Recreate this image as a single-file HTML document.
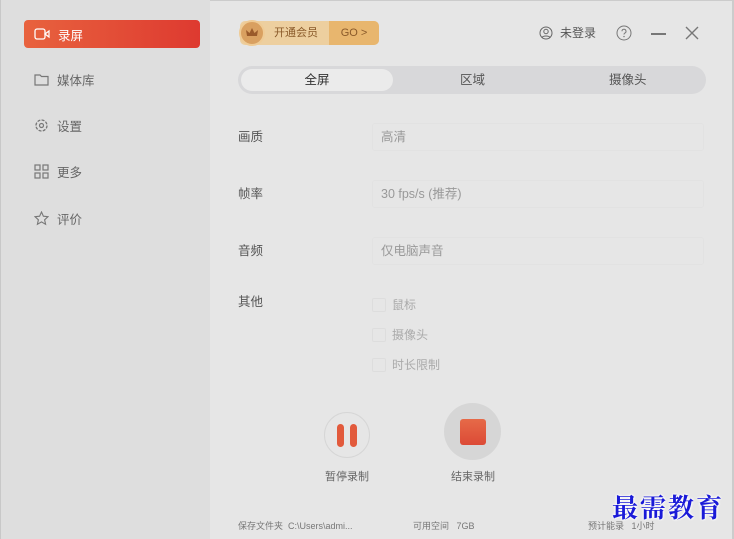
<!DOCTYPE html><html><head><meta charset="utf-8"><style>
*{margin:0;padding:0;box-sizing:border-box}
body{width:734px;height:539px;overflow:hidden;background:#e6e6e6;font-family:"Liberation Sans","Noto Sans CJK SC",sans-serif;position:relative;color:#555}
.a{position:absolute}
#side{left:0;top:0;width:210px;height:539px;background:#dedede;border-left:1px solid #c8c8c8}
.nav{left:24px;width:176px;height:28px;font-size:12.5px;color:#666;display:flex;align-items:center;padding-left:10px}
.nav svg{margin-right:8px}
.lbl{left:238px;font-size:12.5px;color:#555;line-height:14px}
.dd{left:372px;width:332px;height:28px;border:1px solid #e2e2e2;border-radius:3px;font-size:12.5px;color:#999;padding:0 8px;line-height:26px}
.cb{left:372px;width:14px;height:14px;border:1px solid #ddd;border-radius:2px}
.ct{left:392px;font-size:12px;color:#aaa;line-height:14px}
.ft{font-size:9px;color:#777;top:521px;line-height:11px}
</style></head><body>
<div class="a" style="left:0;top:0;width:734px;height:1px;background:#ccc"></div>
<div class="a" style="right:0;top:0;width:2px;height:539px;background:#ccc"></div>
<div id="side" class="a"></div>
<div class="a nav" style="top:20px;background:linear-gradient(90deg,#e8623e,#de3a30);border-radius:4px;color:#fff">
<svg width="16" height="12" viewBox="0 0 16 12"><rect x="1" y="1" width="10" height="10" rx="2" fill="none" stroke="#fff" stroke-width="1.3"/><path d="M11 6l4-3v6z" fill="none" stroke="#fff" stroke-width="1.2"/></svg>录屏</div>
<div class="a nav" style="top:65px"><svg width="15" height="13" viewBox="0 0 15 13"><path d="M1 2h5l1.5 1.5H14V12H1z" fill="none" stroke="#777" stroke-width="1.2"/></svg>媒体库</div>
<div class="a nav" style="top:111px"><svg width="15" height="15" viewBox="0 0 15 15"><circle cx="7.5" cy="7.5" r="5.5" fill="none" stroke="#777" stroke-width="1.3" stroke-dasharray="3 1.3"/><circle cx="7.5" cy="7.5" r="2" fill="none" stroke="#777" stroke-width="1.2"/></svg>设置</div>
<div class="a nav" style="top:157px"><svg width="15" height="15" viewBox="0 0 15 15"><g fill="none" stroke="#777" stroke-width="1.2"><rect x="1" y="1" width="5" height="5"/><rect x="9" y="1" width="5" height="5"/><rect x="1" y="9" width="5" height="5"/><rect x="9" y="9" width="5" height="5"/></g></svg>更多</div>
<div class="a nav" style="top:204px"><svg width="15" height="15" viewBox="0 0 15 15"><path d="M7.5 1l1.9 4.2 4.6.5-3.4 3.1 1 4.5-4.1-2.4-4.1 2.4 1-4.5L1 5.7l4.6-.5z" fill="none" stroke="#777" stroke-width="1.1"/></svg>评价</div>

<div class="a" style="left:240px;top:21px;width:139px;height:24px;border-radius:5px;background:#edcf9f"></div>
<div class="a" style="left:329px;top:21px;width:50px;height:24px;border-radius:0 5px 5px 0;background:#e8b66e;color:#8a5a2a;font-size:11px;line-height:24px;text-align:center">GO &gt;</div>
<div class="a" style="left:239px;top:20px;width:26px;height:26px;border-radius:50%;background:#d9a060;border:2px solid #efcb95"><svg width="22" height="22" viewBox="0 0 22 22"><path d="M6 14l-1-6 3.5 3L11 6l2.5 5L17 8l-1 6z" fill="#9a5a2a"/></svg></div>
<div class="a" style="left:274px;top:27px;font-size:11px;color:#8a5a2a;line-height:12px">开通会员</div>

<svg class="a" style="left:539px;top:26px" width="14" height="14" viewBox="0 0 14 14"><circle cx="7" cy="7" r="6" fill="none" stroke="#666"/><circle cx="7" cy="5.5" r="2.2" fill="none" stroke="#666"/><path d="M3 11.5c1-2 7-2 8 0" fill="none" stroke="#666"/></svg>
<div class="a" style="left:560px;top:26px;font-size:12px;color:#555;line-height:14px">未登录</div>
<svg class="a" style="left:616px;top:25px" width="16" height="16" viewBox="0 0 16 16"><circle cx="8" cy="8" r="7" fill="none" stroke="#777"/><path d="M6 6.3a2 2 0 1 1 2.8 1.8c-.6.3-.8.7-.8 1.4" fill="none" stroke="#777"/><circle cx="8" cy="11.6" r=".7" fill="#777"/></svg>
<div class="a" style="left:651px;top:33px;width:15px;height:1.5px;background:#777"></div>
<svg class="a" style="left:685px;top:26px" width="14" height="14" viewBox="0 0 14 14"><path d="M1 1l12 12M13 1L1 13" stroke="#777" stroke-width="1.4"/></svg>

<div class="a" style="left:238px;top:66px;width:468px;height:28px;border-radius:14px;background:#d8d8da"></div>
<div class="a" style="left:241px;top:69px;width:152px;height:22px;border-radius:11px;background:#ebebeb;text-align:center;font-size:12.5px;line-height:22px;color:#333">全屏</div>
<div class="a" style="left:460px;top:73px;font-size:12.5px;color:#555;line-height:14px">区域</div>
<div class="a" style="left:609px;top:73px;font-size:12.5px;color:#555;line-height:14px">摄像头</div>

<div class="a lbl" style="top:130px">画质</div><div class="a dd" style="top:123px">高清</div>
<div class="a lbl" style="top:187px">帧率</div><div class="a dd" style="top:180px">30 fps/s (推荐)</div>
<div class="a lbl" style="top:244px">音频</div><div class="a dd" style="top:237px">仅电脑声音</div>
<div class="a lbl" style="top:295px">其他</div>
<div class="a cb" style="top:298px"></div><div class="a ct" style="top:298px">鼠标</div>
<div class="a cb" style="top:328px"></div><div class="a ct" style="top:328px">摄像头</div>
<div class="a cb" style="top:358px"></div><div class="a ct" style="top:358px">时长限制</div>

<div class="a" style="left:324px;top:412px;width:46px;height:46px;border-radius:50%;border:1px solid #d6d6d6"></div>
<div class="a" style="left:337px;top:424px;width:7px;height:23px;border-radius:4px;background:#e25a3c"></div>
<div class="a" style="left:350px;top:424px;width:7px;height:23px;border-radius:4px;background:#e25a3c"></div>
<div class="a" style="left:325px;top:471px;font-size:11px;color:#666;line-height:12px">暂停录制</div>
<div class="a" style="left:444px;top:403px;width:57px;height:57px;border-radius:50%;background:#d6d6d6"></div>
<div class="a" style="left:460px;top:419px;width:26px;height:26px;border-radius:3px;background:linear-gradient(#e66a48,#dc4a36)"></div>
<div class="a" style="left:451px;top:471px;font-size:11px;color:#666;line-height:12px">结束录制</div>

<div class="a ft" style="left:238px">保存文件夹&nbsp; C:\Users\admi...</div>
<div class="a ft" style="left:413px">可用空间&nbsp;&nbsp; 7GB</div>
<div class="a ft" style="left:588px">预计能录&nbsp;&nbsp; 1小时</div>
<div class="a" style="left:612px;top:492px;font-family:'Noto Serif CJK SC',serif;font-weight:bold;font-size:26px;line-height:30px;color:#1a1ad8;letter-spacing:2px;text-shadow:0 0 2px #fff,0 0 2px #fff,0 0 3px #fff">最需教育</div>
</body></html>
